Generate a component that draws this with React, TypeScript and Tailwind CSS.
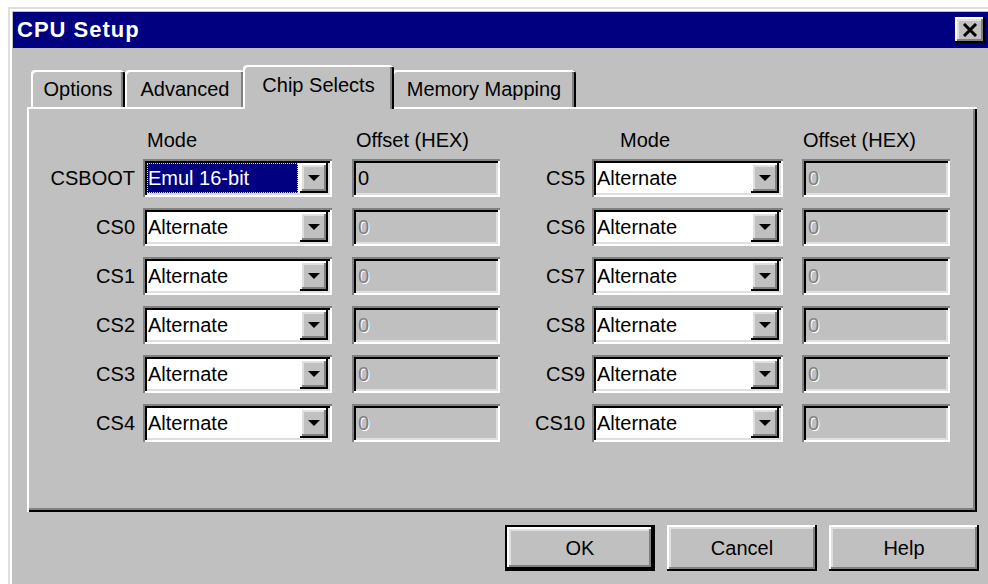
import React from "react"

const FONT = "font-['Liberation_Sans',Arial,sans-serif]"

// Win95-style bevels, drawn at double scale
const RAISED =
  "shadow-[inset_-2px_-2px_#000,inset_2px_2px_#fff,inset_-4px_-4px_#808080,inset_4px_4px_#dfdfdf]"
const SUNKEN =
  "shadow-[inset_2px_2px_#808080,inset_-2px_-2px_#fff,inset_4px_4px_#000,inset_-4px_-4px_#dfdfdf]"

type Row = { label: string; mode: string; offset: string; focused?: boolean }

const LEFT_ROWS: Row[] = [
  { label: "CSBOOT", mode: "Emul 16-bit", offset: "0", focused: true },
  { label: "CS0", mode: "Alternate", offset: "0" },
  { label: "CS1", mode: "Alternate", offset: "0" },
  { label: "CS2", mode: "Alternate", offset: "0" },
  { label: "CS3", mode: "Alternate", offset: "0" },
  { label: "CS4", mode: "Alternate", offset: "0" },
]

const RIGHT_ROWS: Row[] = [
  { label: "CS5", mode: "Alternate", offset: "0" },
  { label: "CS6", mode: "Alternate", offset: "0" },
  { label: "CS7", mode: "Alternate", offset: "0" },
  { label: "CS8", mode: "Alternate", offset: "0" },
  { label: "CS9", mode: "Alternate", offset: "0" },
  { label: "CS10", mode: "Alternate", offset: "0" },
]

function DropButton() {
  return (
    <div className={`flex h-full w-[28px] items-center justify-center bg-[#c0c0c0] ${RAISED}`}>
      <svg width="12" height="6" viewBox="0 0 12 6">
        <polygon points="0,0 12,0 6,6" fill="#000" />
      </svg>
    </div>
  )
}

function Combo({ value, focused, width }: { value: string; focused?: boolean; width: string }) {
  return (
    <div className={`flex h-[38px] ${width} bg-white p-[4px] ${SUNKEN}`}>
      <div className="flex flex-1 items-center pr-[2px]">
        {focused ? (
          <span className="flex h-full w-full items-center bg-[#000080] pl-[1px] text-white outline-1 -outline-offset-1 outline-dotted outline-[#e8e860]">
            {value}
          </span>
        ) : (
          <span className="pl-[1px]">{value}</span>
        )}
      </div>
      <DropButton />
    </div>
  )
}

function OffsetField({ value, enabled }: { value: string; enabled?: boolean }) {
  return (
    <div className={`flex h-[38px] w-[148px] items-center bg-[#c0c0c0] pl-[6px] ${SUNKEN}`}>
      {enabled ? (
        <span>{value}</span>
      ) : (
        <span className="text-[#808080] [text-shadow:1px_1px_0_#fff]">{value}</span>
      )}
    </div>
  )
}

function Group({
  rows,
  labelW,
  comboW,
  comboGap,
  offsetGap,
  modePad,
  offsetPad,
}: {
  rows: Row[]
  labelW: string
  comboW: string
  comboGap: string
  offsetGap: string
  modePad: string
  offsetPad: string
}) {
  return (
    <div className="flex flex-col">
      <div className="flex h-[24px] items-center">
        <div className={labelW} />
        <div className={`${comboGap} ${comboW} ${modePad}`}>Mode</div>
        <div className={`${offsetGap} w-[148px] ${offsetPad}`}>Offset (HEX)</div>
      </div>
      <div className="mt-[7px] flex flex-col gap-[11px]">
        {rows.map((r) => (
          <div key={r.label} className="flex items-center">
            <div className={`${labelW} text-right`}>{r.label}</div>
            <div className={comboGap}>
              <Combo value={r.mode} focused={r.focused} width={comboW} />
            </div>
            <div className={offsetGap}>
              <OffsetField value={r.offset} enabled={r.focused} />
            </div>
          </div>
        ))}
      </div>
    </div>
  )
}

function Tab({ label, width, selected }: { label: string; width: string; selected?: boolean }) {
  const bevel =
    "shadow-[inset_2px_2px_#fff,inset_-2px_0_#000,inset_-4px_0_#808080] rounded-t-[4px]"
  if (selected) {
    return (
      <div
        className={`relative z-10 -mx-[2px] -mb-[2px] flex h-[44px] ${width} items-center justify-center bg-[#c0c0c0] pb-[4px] ${bevel}`}
      >
        {label}
      </div>
    )
  }
  return (
    <div className={`flex h-[37px] ${width} items-center justify-center bg-[#c0c0c0] pt-[1px] ${bevel}`}>
      {label}
    </div>
  )
}

function DialogButton({ label, isDefault }: { label: string; isDefault?: boolean }) {
  if (isDefault) {
    return (
      <div className="h-[46px] w-[150px] border-2 border-black">
        <div className={`flex h-full w-full items-center justify-center bg-[#c0c0c0] ${RAISED}`}>
          {label}
        </div>
      </div>
    )
  }
  return (
    <div className={`flex h-[46px] w-[150px] items-center justify-center bg-[#c0c0c0] ${RAISED}`}>
      {label}
    </div>
  )
}

export default function App() {
  return (
    <div className={`h-[584px] w-[988px] overflow-hidden bg-white pl-[8px] pt-[7px] text-[20px] leading-none text-black ${FONT}`}>
      <div className="h-[600px] w-[986px] border-l-2 border-t-2 border-[#dfdfdf] bg-[#c0c0c0] pl-[3px] pr-[5px] pt-[3px] shadow-[inset_2px_2px_#fff]">
        {/* title bar */}
        <div className="flex h-[36px] items-center justify-between bg-[#000080] pl-[4px] pr-[4px]">
          <span className="text-[22px] font-bold tracking-[1px] text-white">CPU Setup</span>
          <div className={`flex h-[26px] w-[30px] items-center justify-center bg-[#c0c0c0] ${RAISED}`}>
            <svg width="16" height="14" viewBox="0 0 16 14">
              <path d="M2 1 L14 13 M14 1 L2 13" stroke="#000" strokeWidth="3" />
            </svg>
          </div>
        </div>

        <div className="pl-[14px] pr-[10px]">
          {/* tabs */}
          <div className="mr-[2px] mt-[17px] flex h-[42px] items-end pl-[4px]">
            <Tab label="Options" width="w-[94px]" />
            <Tab label="Advanced" width="w-[120px]" />
            <Tab label="Chip Selects" width="w-[151px]" selected />
            <Tab label="Memory Mapping" width="w-[184px]" />
          </div>

          {/* tab page */}
          <div className="mr-[2px] flex h-[405px] gap-[17px] pl-[13px] pt-[21px] shadow-[inset_2px_2px_#fff,inset_-2px_-2px_#000,inset_-4px_-4px_#808080]">
            <Group
              rows={LEFT_ROWS}
              labelW="w-[95px]"
              comboW="w-[189px]"
              comboGap="ml-[8px]"
              offsetGap="ml-[20px]"
              modePad="pl-[4px]"
              offsetPad="pl-[4px]"
            />
            <Group
              rows={RIGHT_ROWS}
              labelW="w-[68px]"
              comboW="w-[191px]"
              comboGap="ml-[7px]"
              offsetGap="ml-[19px]"
              modePad="pl-[28px]"
              offsetPad="pl-[1px]"
            />
          </div>

          {/* dialog buttons */}
          <div className="mt-[13px] flex justify-end gap-[12px]">
            <DialogButton label="OK" isDefault />
            <DialogButton label="Cancel" />
            <DialogButton label="Help" />
          </div>
        </div>
      </div>
    </div>
  )
}
